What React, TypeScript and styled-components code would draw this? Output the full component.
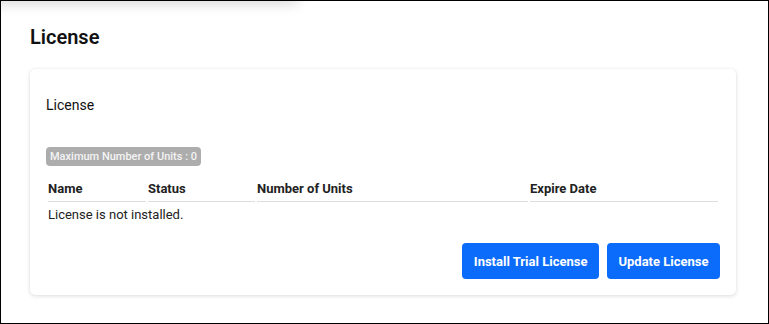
import React from "react";
import styled, { createGlobalStyle } from "styled-components";

const GlobalStyle = createGlobalStyle`
  html, body {
    margin: 0;
    padding: 0;
    background: #ffffff;
  }
  body {
    font-family: Roboto, "Liberation Sans", Arial, sans-serif;
    color: #212529;
  }
`;

const Frame = styled.div`
  position: relative;
  width: 769px;
  height: 324px;
  box-sizing: border-box;
  border: 1px solid #000;
  overflow: hidden;
  padding: 22px 32px 0 29px;
`;

const TopShadow = styled.div`
  position: absolute;
  top: -12px;
  left: -20px;
  width: 320px;
  height: 12px;
  box-shadow: 0 2px 14px rgba(0, 0, 0, 0.18);
  border-radius: 0 0 40px 40px;
`;

const PageTitle = styled.h2`
  margin: 0 0 18px;
  font-size: 20px;
  font-weight: 600;
  line-height: 28px;
  color: #111;
`;

const Card = styled.div`
  background: #fff;
  border-radius: 5px;
  box-shadow: 0 1px 4px rgba(0, 0, 0, 0.14), 0 0 1px rgba(0, 0, 0, 0.08);
  padding: 28px 16px 16px;
`;

const CardTitle = styled.div`
  font-size: 14px;
  line-height: 16px;
  color: #111;
  margin-bottom: 32px;
`;

const Badge = styled.span`
  display: inline-block;
  background: #adadad;
  color: #f4f4f4;
  font-size: 11px;
  font-weight: 500;
  line-height: 19px;
  padding: 0 4px;
  border-radius: 4px;
`;

const Table = styled.table`
  width: 674px;
  margin-top: 11px;
  border-collapse: separate;
  border-spacing: 2px;
  font-size: 13px;
  color: #222;
`;

const Th = styled.th<{ $w: number }>`
  width: ${(p) => p.$w}px;
  text-align: left;
  font-weight: 700;
  padding: 2px 0 5px;
  border-bottom: 1px solid #dedede;
  line-height: 15px;
`;

const Td = styled.td`
  padding: 3px 0 2px;
  line-height: 15px;
`;

const Actions = styled.div`
  display: flex;
  justify-content: flex-end;
  gap: 8px;
  margin-top: 17px;
`;

const Button = styled.button`
  height: 36px;
  padding: 0 11.5px;
  border: none;
  border-radius: 4px;
  background: #0b6cfb;
  color: #fff;
  font-family: Roboto, "Liberation Sans", Arial, sans-serif;
  font-size: 13px;
  font-weight: 700;
  cursor: pointer;
`;

const columns = [
  { label: "Name", w: 98 },
  { label: "Status", w: 107 },
  { label: "Number of Units", w: 271 },
  { label: "Expire Date", w: 188 },
];

export default function App() {
  return (
    <>
      <GlobalStyle />
      <Frame>
        <TopShadow />
        <PageTitle>License</PageTitle>
        <Card>
          <CardTitle>License</CardTitle>
          <Badge>Maximum Number of Units : 0</Badge>
          <Table>
            <thead>
              <tr>
                {columns.map((c) => (
                  <Th key={c.label} $w={c.w}>
                    {c.label}
                  </Th>
                ))}
              </tr>
            </thead>
            <tbody>
              <tr>
                <Td colSpan={4}>License is not installed.</Td>
              </tr>
            </tbody>
          </Table>
          <Actions>
            <Button>Install Trial License</Button>
            <Button>Update License</Button>
          </Actions>
        </Card>
      </Frame>
    </>
  );
}
